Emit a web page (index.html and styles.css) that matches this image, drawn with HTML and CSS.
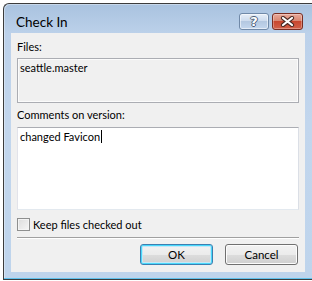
FILE: index.html
```html
<!DOCTYPE html>
<html>
<head>
<meta charset="utf-8">
<link rel="stylesheet" href="styles.css">
</head>
<body>
<div class="window">
  <div class="titlebar">
    <span class="title">Check In</span>
    <div class="caption-buttons">
      <div class="cap-btn help"><span class="qmark">?</span></div>
      <div class="cap-btn close">
        <svg width="15" height="11" viewBox="0 0 15 11">
          <path d="M3 2 L12 9 M12 2 L3 9" stroke="#4a2a24" stroke-width="4.2" stroke-linecap="round" fill="none"/>
          <path d="M3 2 L12 9 M12 2 L3 9" stroke="#ffffff" stroke-width="2.2" stroke-linecap="round" fill="none"/>
        </svg>
      </div>
    </div>
  </div>
  <div class="content">
    <div class="label label-files">Files:</div>
    <div class="files-box">seattle.master</div>
    <div class="label label-comments">Comments on version:</div>
    <div class="comment-box"><span class="comment-text">changed Favicon</span><span class="caret"></span></div>
    <label class="check-row">
      <span class="checkbox"></span>
      <span class="check-label">Keep files checked out</span>
    </label>
    <div class="separator"></div>
    <div class="buttons">
      <button class="btn btn-default">OK</button>
      <button class="btn">Cancel</button>
    </div>
  </div>
</div>
</body>
</html>
```
FILE: styles.css
```css
* { box-sizing: border-box; }
html, body {
  margin: 0;
  padding: 0;
  width: 312px;
  height: 281px;
  overflow: hidden;
  background: #ffffff;
}
body {
  font-family: "Segoe UI", Lato, "Noto Sans", sans-serif;
  font-size: 11px;
  color: #000;
}
.window {
  margin: 3px 0 0 3px;
  width: 309px;
  height: 277px;
  border: 1px solid #3c3c3c;
  border-right: none;
  border-radius: 6px 0 0 0;
  background: linear-gradient(to bottom, #a9c2df 0px, #bcd1ea 30px, #c2d6ed 120px, #bed4ec 100%);
  padding: 0 7px 7px 7px;
  display: flex;
  flex-direction: column;
  box-shadow: inset 0 -1px 0 #5fc1ec, inset 1px 1px 0 rgba(255,255,255,0.35);
}
.titlebar {
  height: 29px;
  display: flex;
  align-items: flex-start;
  justify-content: space-between;
  padding: 0 2px 0 5px;
}
.title {
  margin-top: 10px;
  line-height: 16px;
  font-size: 13.5px;
  color: #000;
}
.caption-buttons {
  margin-top: 9px;
  display: flex;
  gap: 3px;
}
.cap-btn {
  height: 17px;
  border-radius: 3px;
  display: flex;
  align-items: center;
  justify-content: center;
}
.help {
  width: 30px;
  border: 1px solid #7089a8;
  background: linear-gradient(to bottom, #e6eef8 0%, #cedcee 45%, #b4c8e1 50%, #c4d7ee 100%);
  box-shadow: inset 0 0 0 1px rgba(255,255,255,0.55);
}
.qmark {
  font-family: "DejaVu Sans", sans-serif;
  font-weight: bold;
  font-size: 13px;
  line-height: 13px;
  color: #ffffff;
  text-shadow: -1px 0 #4d5f78, 1px 0 #4d5f78, 0 -1px #4d5f78, 0 1px #4d5f78;
}
.close {
  width: 31px;
  border: 1px solid #7a2d22;
  background: linear-gradient(to bottom, #e9a99b 0%, #d98772 45%, #c8472f 50%, #d2614a 100%);
  box-shadow: inset 0 0 0 1px rgba(255,255,255,0.3);
}
.content {
  flex: 1;
  background: #f0f0f0;
  padding: 0 6px;
  display: flex;
  flex-direction: column;
}
.label {
  line-height: 16px;
}
.label-files { margin-top: 6px; }
.files-box {
  margin-top: 3px;
  height: 45px;
  border: 1px solid #abadb3;
  box-shadow: inset 0 0 0 1px #fbfbfb;
  padding: 1px 2px;
  line-height: 16px;
  background: #f0f0f0;
}
.label-comments { margin-top: 4px; }
.comment-box {
  margin-top: 4px;
  height: 83px;
  border: 1px solid #abadb3;
  border-color: #abadb3 #dbdfe6 #e3e9ef #e2e3ea;
  background: #ffffff;
  padding: 1px 2px 0;
  line-height: 16px;
  display: block;
}
.caret {
  display: inline-block;
  width: 1px;
  height: 13px;
  background: #000;
  vertical-align: -2px;
  margin-left: 1px;
}
.check-row {
  margin-top: 8px;
  display: flex;
  align-items: center;
  gap: 3px;
  height: 13px;
}
.checkbox {
  width: 13px;
  height: 13px;
  border: 1px solid #8e8f8f;
  background: linear-gradient(135deg, #dcdcdc 0%, #f6f6f6 100%);
  box-shadow: inset 0 0 0 1px #f4f4f4;
  flex: none;
}
.check-label {
  line-height: 16px;
}
.separator {
  margin-top: 6px;
  height: 2px;
  border-top: 1px solid #a0a0a0;
  border-bottom: 1px solid #ffffff;
}
.buttons {
  margin-top: 5px;
  display: flex;
  justify-content: flex-end;
  gap: 12px;
  padding-right: 1px;
}
.btn {
  width: 73px;
  height: 21px;
  border: 1px solid #707070;
  border-radius: 3px;
  background: linear-gradient(to bottom, #f2f2f2 0%, #ebebeb 50%, #dddddd 50%, #cfcfcf 100%);
  box-shadow: inset 0 0 0 1px #fcfcfc;
  font-family: "Segoe UI", Lato, "Noto Sans", sans-serif;
  font-size: 11.5px;
  line-height: 16px;
  padding: 0;
  color: #000;
}
.btn-default {
  border-color: #3c7fb1;
  box-shadow: inset 0 0 0 1px #48d8fb, inset 0 0 0 2px #c4e7f7;
}
```
